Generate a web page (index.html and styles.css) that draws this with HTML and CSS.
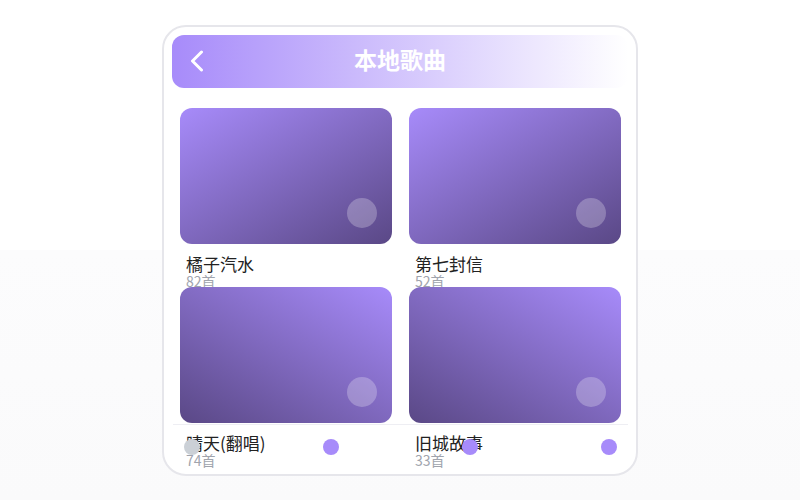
FILE: index.html
```html
<!DOCTYPE html>
<html lang="zh">
<head>
<meta charset="utf-8">
<title>本地歌曲</title>
<link rel="stylesheet" href="styles.css">
</head>
<body>
<div class="phone">
  <header class="topbar">
    <span class="back">
      <svg width="14" height="22" viewBox="0 0 14 22"><path d="M11.5 2 L2.5 11 L11.5 20" fill="none" stroke="#fff" stroke-width="3" stroke-linecap="round" stroke-linejoin="round"/></svg>
    </span>
    <h1 class="title">本地歌曲</h1>
    <span></span>
  </header>
  <main class="grid">
    <div class="item">
      <div class="cover cover-a"><span class="play"></span></div>
      <div class="name">橘子汽水</div>
      <div class="count">82首</div>
    </div>
    <div class="item">
      <div class="cover cover-a"><span class="play"></span></div>
      <div class="name">第七封信</div>
      <div class="count">52首</div>
    </div>
    <div class="item">
      <div class="cover cover-b"><span class="play"></span></div>
      <div class="name">晴天(翻唱)</div>
      <div class="count">74首</div>
    </div>
    <div class="item">
      <div class="cover cover-b"><span class="play"></span></div>
      <div class="name">旧城故事</div>
      <div class="count">33首</div>
    </div>
  </main>
  <nav class="dots">
    <span class="dot dot-off"></span>
    <span class="dot"></span>
    <span class="dot"></span>
    <span class="dot"></span>
  </nav>
</div>
</body>
</html>
```

FILE: styles.css
```css
* { box-sizing: border-box; }
html, body { margin: 0; height: 100%; }
body {
  background: linear-gradient(to bottom, #ffffff 0, #ffffff 50%, #fcfcfd 50%, #fafafb 100%);
  font-family: "Noto Sans CJK SC", sans-serif;
  padding-top: 25px;
}
.phone {
  position: relative;
  width: 476px;
  height: 451px;
  margin: 0 auto;
  border: 2px solid #e6e6eb;
  border-radius: 24px;
  background: #fff;
  padding: 8px 8px 0 8px;
  overflow: hidden;
}
.topbar {
  height: 53px;
  border-radius: 12px;
  background: linear-gradient(to right, #a78bfa, #ffffff);
  display: grid;
  grid-template-columns: 1fr auto 1fr;
  align-items: center;
  padding: 0 18px 1px 18px;
}
.back { display: flex; align-items: center; }
.title {
  margin: -4px 0 0 0;
  color: #fff;
  font-size: 23px;
  font-weight: 700;
  line-height: 1;
}
.grid {
  margin-top: 20px;
  padding: 0 7px 0 8px;
  display: grid;
  grid-template-columns: 1fr 1fr;
  grid-auto-rows: 179px;
  column-gap: 17px;
}
.item { display: flex; flex-direction: column; min-height: 0; }
.cover {
  position: relative;
  height: 136px;
  border-radius: 12px;
  flex: none;
}
.cover-a { background: linear-gradient(150deg, #a78bfa 0%, #5a4886 100%); }
.cover-b { background: linear-gradient(30deg, #5a4886 0%, #a78bfa 100%); }
.play {
  position: absolute;
  right: 15px;
  bottom: 16px;
  width: 30px;
  height: 30px;
  border-radius: 50%;
  background: rgba(255, 255, 255, 0.25);
}
.name {
  margin-top: 10px;
  padding-left: 6px;
  font-size: 17px;
  line-height: 20px;
  color: #222;
}
.count {
  padding-left: 6px;
  font-size: 14px;
  line-height: 14px;
  color: #a0a4ad;
}
.dots {
  position: absolute;
  left: 9px;
  right: 8px;
  bottom: 5px;
  height: 45px;
  border-top: 1px solid #eeeef3;
  display: flex;
  justify-content: space-between;
  align-items: center;
  padding: 0 11px;
}
.dot {
  width: 16px;
  height: 16px;
  border-radius: 50%;
  background: #a78bfa;
}
.dot-off { background: #cbd0d6; }
```
